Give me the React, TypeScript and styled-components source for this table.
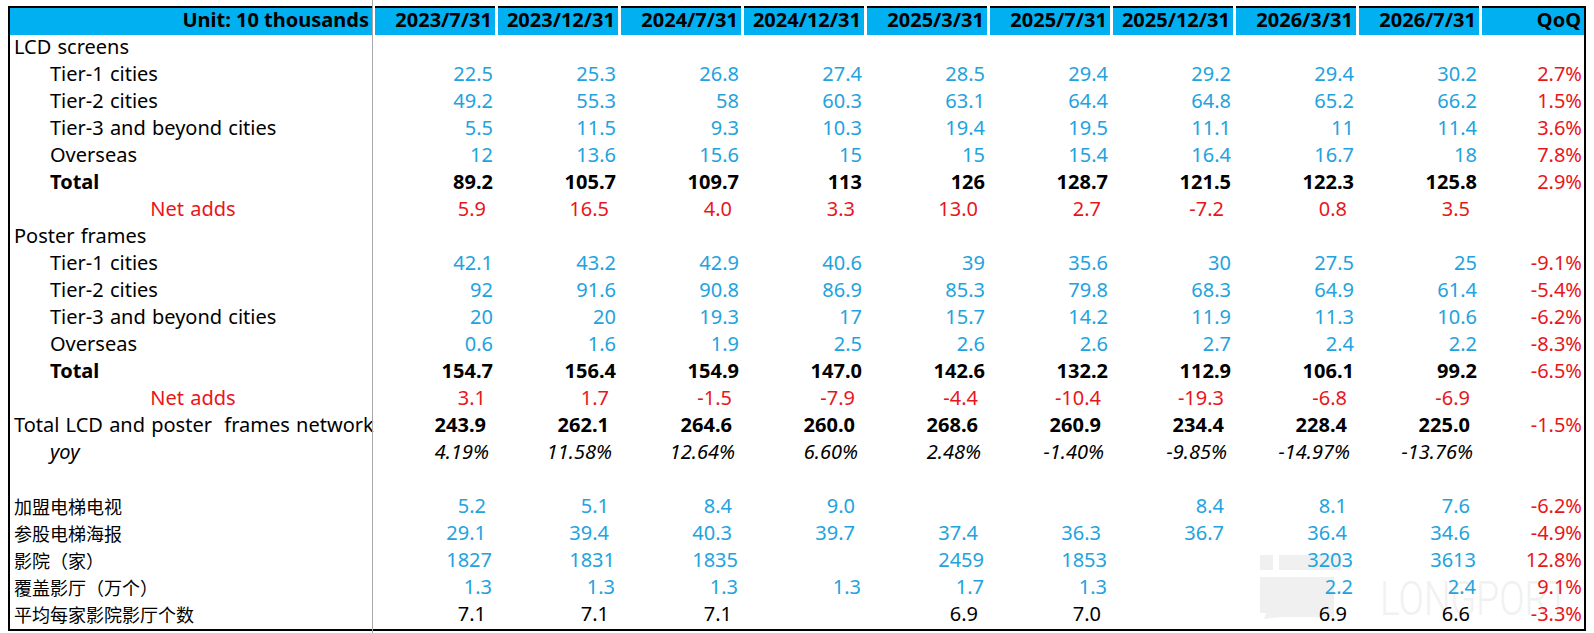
import React from "react";
import styled, { createGlobalStyle, css } from "styled-components";

const GlobalStyle = createGlobalStyle`
  html, body { margin: 0; padding: 0; background: #ffffff; }
  body { font-family: "Noto Sans", "Noto Sans CJK SC", sans-serif; color: #000; }
`;

const BLUE_TEXT = "#22a3de";
const RED = "#e8161b";

const Page = styled.div`
  position: relative;
  width: 1594px;
  height: 633px;
  overflow: hidden;
  padding: 6px 0 0 8px;
  box-sizing: border-box;
`;

const Sheet = styled.div`
  position: relative;
  z-index: 1;
  display: grid;
  grid-template-columns: 362px repeat(9, 120px) 102px;
  grid-auto-rows: 27px;
  grid-template-rows: 29px;
  column-gap: 3px;
  width: max-content;
  border-left: 2px solid #000;
  border-right: 2px solid #000;
  border-bottom: 2px solid #000;
  font-size: 20px;
`;

const HeadCell = styled.div`
  background: #00b0f0;
  border-top: 2px solid #000;
  font-weight: 700;
  text-align: right;
  padding: 0 3px 4px 0;
  line-height: 23px;
  white-space: nowrap;
`;

type LabelProps = {
  $indent?: boolean;
  $center?: boolean;
  $bold?: boolean;
  $italic?: boolean;
  $red?: boolean;
  $cjk?: boolean;
};

const LabelCell = styled.div<LabelProps>`
  padding: 0 0 4px ${(p) => (p.$indent ? 40 : 4)}px;
  line-height: 23px;
  white-space: nowrap;
  word-spacing: 1px;
  text-align: ${(p) => (p.$center ? "center" : "left")};
  font-weight: ${(p) => (p.$bold ? 700 : 400)};
  font-style: ${(p) => (p.$italic ? "italic" : "normal")};
  color: ${(p) => (p.$red ? RED : "#000")};
  ${(p) =>
    p.$cjk &&
    css`
      font-family: "Noto Sans CJK SC", "Noto Sans", sans-serif;
      font-size: 18px;
      padding-bottom: 3px;
      line-height: 24px;
    `}
`;

type Tone = "blue" | "black" | "red";

const NumCell = styled.div<{ $pad: number; $bold?: boolean; $italic?: boolean; $tone: Tone }>`
  text-align: right;
  padding: 0 ${(p) => p.$pad}px 4px 0;
  line-height: 23px;
  white-space: nowrap;
  font-weight: ${(p) => (p.$bold ? 700 : 400)};
  font-style: ${(p) => (p.$italic ? "italic" : "normal")};
  color: ${(p) => (p.$tone === "blue" ? BLUE_TEXT : p.$tone === "red" ? RED : "#000")};
`;

const FreezeLine = styled.div`
  position: absolute;
  z-index: 2;
  left: 372px;
  top: 0;
  width: 1px;
  height: 100%;
  background: #a8a8a8;
`;

const Watermark = styled.div`
  position: absolute;
  z-index: 0;
  left: 1260px;
  top: 555px;
  display: flex;
  align-items: flex-end;
  gap: 30px;
  pointer-events: none;
`;

const WatermarkText = styled.span`
  display: inline-block;
  font-family: "Roboto", "Noto Sans", sans-serif;
  font-weight: 300;
  font-size: 48px;
  line-height: 1;
  color: #f1f1f1;
  margin-bottom: -4px;
  transform: scaleX(0.78);
  transform-origin: left center;
`;

const headers = [
  "2023/7/31",
  "2023/12/31",
  "2024/7/31",
  "2024/12/31",
  "2025/3/31",
  "2025/7/31",
  "2025/12/31",
  "2026/3/31",
  "2026/7/31",
  "QoQ",
];

type Row = {
  label: string;
  indent?: boolean;
  center?: boolean;
  labelBold?: boolean;
  labelItalic?: boolean;
  labelRed?: boolean;
  cjk?: boolean;
  values?: string[];
  tone?: Tone;
  bold?: boolean;
  italic?: boolean;
  pad?: number;
  qoq?: string;
};

const rows: Row[] = [
  { label: "LCD screens" },
  { label: "Tier-1 cities", indent: true, tone: "blue", pad: 2, values: ["22.5", "25.3", "26.8", "27.4", "28.5", "29.4", "29.2", "29.4", "30.2"], qoq: "2.7%" },
  { label: "Tier-2 cities", indent: true, tone: "blue", pad: 2, values: ["49.2", "55.3", "58", "60.3", "63.1", "64.4", "64.8", "65.2", "66.2"], qoq: "1.5%" },
  { label: "Tier-3 and beyond cities", indent: true, tone: "blue", pad: 2, values: ["5.5", "11.5", "9.3", "10.3", "19.4", "19.5", "11.1", "11", "11.4"], qoq: "3.6%" },
  { label: "Overseas", indent: true, tone: "blue", pad: 2, values: ["12", "13.6", "15.6", "15", "15", "15.4", "16.4", "16.7", "18"], qoq: "7.8%" },
  { label: "Total", indent: true, labelBold: true, tone: "black", bold: true, pad: 2, values: ["89.2", "105.7", "109.7", "113", "126", "128.7", "121.5", "122.3", "125.8"], qoq: "2.9%" },
  { label: "Net adds", center: true, labelRed: true, tone: "red", pad: 9, values: ["5.9", "16.5", "4.0", "3.3", "13.0", "2.7", "-7.2", "0.8", "3.5"], qoq: "" },
  { label: "Poster frames" },
  { label: "Tier-1 cities", indent: true, tone: "blue", pad: 2, values: ["42.1", "43.2", "42.9", "40.6", "39", "35.6", "30", "27.5", "25"], qoq: "-9.1%" },
  { label: "Tier-2 cities", indent: true, tone: "blue", pad: 2, values: ["92", "91.6", "90.8", "86.9", "85.3", "79.8", "68.3", "64.9", "61.4"], qoq: "-5.4%" },
  { label: "Tier-3 and beyond cities", indent: true, tone: "blue", pad: 2, values: ["20", "20", "19.3", "17", "15.7", "14.2", "11.9", "11.3", "10.6"], qoq: "-6.2%" },
  { label: "Overseas", indent: true, tone: "blue", pad: 2, values: ["0.6", "1.6", "1.9", "2.5", "2.6", "2.6", "2.7", "2.4", "2.2"], qoq: "-8.3%" },
  { label: "Total", indent: true, labelBold: true, tone: "black", bold: true, pad: 2, values: ["154.7", "156.4", "154.9", "147.0", "142.6", "132.2", "112.9", "106.1", "99.2"], qoq: "-6.5%" },
  { label: "Net adds", center: true, labelRed: true, tone: "red", pad: 9, values: ["3.1", "1.7", "-1.5", "-7.9", "-4.4", "-10.4", "-19.3", "-6.8", "-6.9"], qoq: "" },
  { label: "Total LCD and poster\u00a0\u00a0frames network", tone: "black", bold: true, pad: 9, values: ["243.9", "262.1", "264.6", "260.0", "268.6", "260.9", "234.4", "228.4", "225.0"], qoq: "-1.5%" },
  { label: "yoy", indent: true, labelItalic: true, tone: "black", italic: true, pad: 6, values: ["4.19%", "11.58%", "12.64%", "6.60%", "2.48%", "-1.40%", "-9.85%", "-14.97%", "-13.76%"], qoq: "" },
  { label: "" },
  { label: "加盟电梯电视", cjk: true, tone: "blue", pad: 9, values: ["5.2", "5.1", "8.4", "9.0", "", "", "8.4", "8.1", "7.6"], qoq: "-6.2%" },
  { label: "参股电梯海报", cjk: true, tone: "blue", pad: 9, values: ["29.1", "39.4", "40.3", "39.7", "37.4", "36.3", "36.7", "36.4", "34.6"], qoq: "-4.9%" },
  { label: "影院（家）", cjk: true, tone: "blue", pad: 3, values: ["1827", "1831", "1835", "", "2459", "1853", "", "3203", "3613"], qoq: "12.8%" },
  { label: "覆盖影厅（万个）", cjk: true, tone: "blue", pad: 3, values: ["1.3", "1.3", "1.3", "1.3", "1.7", "1.3", "", "2.2", "2.4"], qoq: "9.1%" },
  { label: "平均每家影院影厅个数", cjk: true, tone: "black", pad: 9, values: ["7.1", "7.1", "7.1", "", "6.9", "7.0", "", "6.9", "6.6"], qoq: "-3.3%" },
];

const Logo: React.FC = () => (
  <svg width="90" height="64" viewBox="0 0 90 64" aria-hidden="true">
    <rect x="0" y="0" width="13" height="15" fill="#f0f0f0" />
    <rect x="19" y="0" width="62" height="15" fill="#f0f0f0" />
    <path d="M0 22 H74 V62 H22 L4 64 L6 58 H0 Z" fill="#f0f0f0" />
  </svg>
);

export default function App() {
  return (
    <>
      <GlobalStyle />
      <Page>
        <Watermark>
          <Logo />
          <WatermarkText>LONGPORT</WatermarkText>
        </Watermark>
        <Sheet>
          <HeadCell>Unit: 10 thousands</HeadCell>
          {headers.map((h) => (
            <HeadCell key={h}>{h}</HeadCell>
          ))}
          {rows.map((r, i) => (
            <React.Fragment key={i}>
              <LabelCell
                $indent={r.indent}
                $center={r.center}
                $bold={r.labelBold}
                $italic={r.labelItalic}
                $red={r.labelRed}
                $cjk={r.cjk}
              >
                {r.label}
              </LabelCell>
              {Array.from({ length: 9 }).map((_, j) => (
                <NumCell
                  key={j}
                  $pad={r.pad ?? 3}
                  $bold={r.bold}
                  $italic={r.italic}
                  $tone={r.tone ?? "black"}
                >
                  {r.values ? r.values[j] : ""}
                </NumCell>
              ))}
              <NumCell $pad={2} $tone="red">
                {r.qoq ?? ""}
              </NumCell>
            </React.Fragment>
          ))}
        </Sheet>
        <FreezeLine />
      </Page>
    </>
  );
}
